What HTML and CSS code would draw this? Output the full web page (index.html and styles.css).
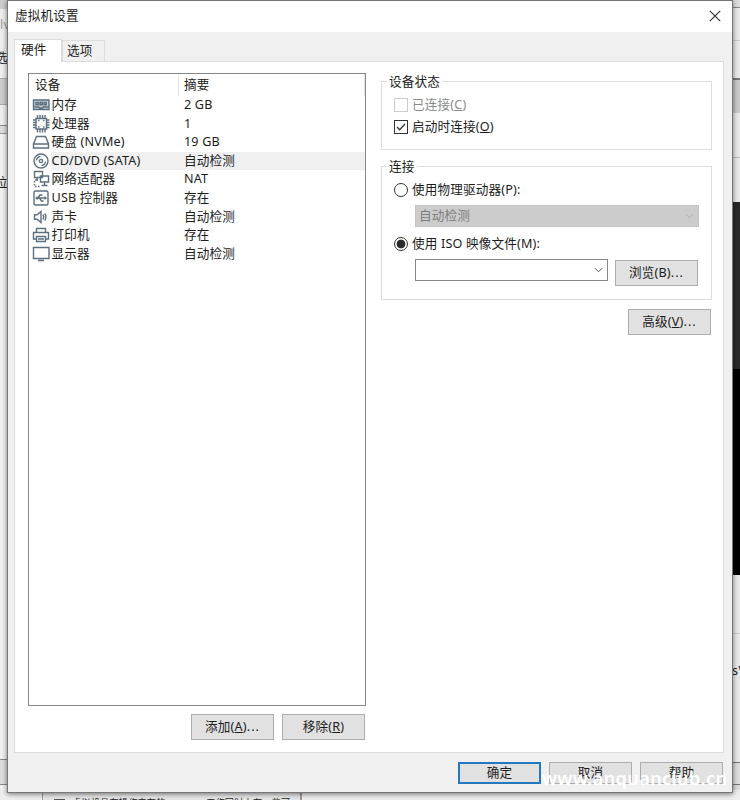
FILE: index.html
```
<!DOCTYPE html>
<html lang="zh-CN">
<head>
<meta charset="utf-8">
<title>虚拟机设置</title>
<link rel="stylesheet" href="styles.css">
</head>
<body>
<div class="desktop">
  <div class="backdrop">
    <div class="edge edge-left">
      <div class="l-title"></div>
      <div class="l-name">lv</div>
      <div class="l-menu">选</div>
      <div class="l-bar"></div>
      <div class="l-tool"></div>
      <div class="l-gap"></div>
      <div class="l-page">位</div>
      <div class="l-status"></div>
      <div class="l-end"></div>
    </div>
    <div class="edge edge-right">
      <div class="r-title"></div>
      <div class="r-menu"></div>
      <div class="r-tool"></div>
      <div class="r-bar"></div>
      <div class="r-row"></div>
      <div class="r-space"></div>
      <div class="r-screen"></div>
      <div class="r-black"></div>
      <div class="r-info"></div>
      <div class="r-text">s\</div>
      <div class="r-status"></div>
      <div class="r-end"></div>
    </div>
  </div>
  <div class="under"><div class="note"><i></i><span>虚拟机具在操作内存的 vmware 工作同时占有一些可</span></div></div>

  <div class="dialog">
    <header class="titlebar">
      <span>虚拟机设置</span>
      <svg class="close" viewBox="0 0 12 12"><path d="M.8.8 11.2 11.2M11.2.8.8 11.2"/></svg>
    </header>
    <nav class="tabs"><div class="tab active">硬件</div><div class="tab">选项</div></nav>
    <main class="panel">
      <section class="left">
        <div class="list">
          <div class="head"><span class="name">设备</span><span class="sum">摘要</span></div>
          <div class="row"><svg viewBox="0 0 18 18"><path class="tint" d="M1.500 4h15.500v9.500h-15.500z"/><path d="M1.500 4h15.500v9.500h-15.500zM4 6.500h2.200v2.200H4zM8 6.500h2.200v2.200H8zM12 6.500h2.200v2.200H12zM2.500 11h4l1 1h3l1-1h5"/></svg><span class="name">内存</span><span>2 GB</span></div>
          <div class="row"><svg viewBox="0 0 18 18"><path d="M4 3.500h10.500V14H4zM5.500 0v3M8 0v3M10.500 0v3M13 0v3M5.500 14.500v3M8 14.500v3M10.500 14.500v3M13 14.500v3M1 5h3M1 7.500h3M1 10h3M1 12.500h3M14.500 5h3M14.500 7.500h3M14.500 10h3M14.500 12.500h3"/><path d="M6 5.500h1.500M6 12h1.500M11 5.500h1.500M11 12h1.500"/></svg><span class="name">处理器</span><span>1</span></div>
          <div class="row"><svg viewBox="0 0 18 18"><path d="M4.500 3.500h9l3 7.500v4h-15v-4zM1.500 11h15"/></svg><span class="name">硬盘 (NVMe)</span><span>19 GB</span></div>
          <div class="row selected"><svg viewBox="0 0 18 18"><circle cx="9" cy="9" r="7"/><circle cx="9" cy="9" r="1.600"/><path d="M4.500 8.500a4.500 4.500 0 0 1 4-4M13.500 9.500a4.500 4.500 0 0 1-4 4"/></svg><span class="name">CD/DVD (SATA)</span><span>自动检测</span></div>
          <div class="row"><svg viewBox="0 0 18 18"><path d="M2.500 1.500h8v6h-8zM8.500 6h8v6h-8zM12.500 12v3M9.500 15.500h6M5 7.500v2.500M3 10h3"/><path stroke-dasharray="1.500 1.500" d="M2.500 11v5.500H8"/></svg><span class="name">网络适配器</span><span>NAT</span></div>
          <div class="row"><svg viewBox="0 0 18 18"><rect x="2" y="2" width="14" height="14" rx="1.500"/><path d="M4 9h9.500M6 9l2-3h2.500M7.500 9l2 3h2"/><circle cx="5" cy="9" r=".8"/><path d="m12.500 7.800 1.500 1.200-1.500 1.200"/></svg><span class="name">USB 控制器</span><span>存在</span></div>
          <div class="row"><svg viewBox="0 0 18 18"><path d="M2.500 6.800H5l4-3.300v11l-4-3.300H2.500zM11 6.500q1.600 2.500 0 5M12.800 5.500q2.300 3.500 0 7"/></svg><span class="name">声卡</span><span>自动检测</span></div>
          <div class="row"><svg viewBox="0 0 18 18"><path d="M4.500 6V2.500h9V6M4.500 13h-3V6.500h15V13h-3M4.500 10.500h9v5h-9zM6 13h6"/></svg><span class="name">打印机</span><span>存在</span></div>
          <div class="row"><svg viewBox="0 0 18 18"><path d="M1.500 2.500h15.500V13.500h-15.500zM6 15.500h6"/></svg><span class="name">显示器</span><span>自动检测</span></div>
        </div>
        <div class="actions"><div class="btn">添加(<u>A</u>)<span class="dots">...</span></div><div class="btn">移除(<u>R</u>)</div></div>
      </section>
      <section class="right">
        <div class="group state">
          <div class="legend">设备状态</div>
          <div class="opt off"><i class="check"></i>已连接(<u>C</u>)</div>
          <div class="opt"><i class="check"><svg viewBox="0 0 12 12"><path d="m2 6 2.700 2.700L10 3"/></svg></i>启动时连接(<u>O</u>)</div>
        </div>
        <div class="group conn">
          <div class="legend">连接</div>
          <div class="opt"><i class="radio"></i>使用物理驱动器(P):</div>
          <div class="combo disabled">自动检测<svg viewBox="0 0 10 6"><path d="m1 1 4 4 4-4"/></svg></div>
          <div class="opt iso"><i class="radio on"></i>使用 ISO 映像文件(M):</div>
          <div class="file"><div class="combo"><svg viewBox="0 0 10 6"><path d="m1 1 4 4 4-4"/></svg></div><div class="btn">浏览(B)<span class="dots">...</span></div></div>
        </div>
        <div class="btn advanced">高级(<u>V</u>)<span class="dots">...</span></div>
      </section>
    </main>
    <footer class="foot"><div class="btn primary">确定</div><div class="btn">取消</div><div class="btn">帮助</div></footer>
  </div>
  <div class="watermark">www.anquanclub.cn</div>
</div>
</body>
</html>
```
FILE: styles.css
```
* { box-sizing: border-box; }
body { margin: 0; font: 12.6px/18px "Noto Sans", "Noto Sans CJK SC", sans-serif; letter-spacing: .17px; color: #1c1c1c; }
.desktop { position: relative; width: 740px; height: 800px; overflow: hidden; background: #e9e9e9; }
.backdrop { display: flex; justify-content: space-between; height: 800px; }
.edge { display: flex; flex-direction: column; width: 8px; overflow: hidden; white-space: nowrap; }
.edge > div { flex: none; }
.l-title { height: 9px; background: #ccc; }
.l-name { height: 34px; padding-top: 7px; color: #999; background: #eee; }
.l-menu { height: 35px; padding-top: 6px; text-indent: -5px; background: #eee; }
.l-bar { height: 27px; background: #ccc; border-top: 1px solid #aaa; border-bottom: 1px solid #aaa; }
.l-tool { height: 21px; background: #eee; border-bottom: 1px solid #888; }
.l-gap { height: 8px; background: #ddd; border-bottom: 1px solid #999; }
.l-page { height: 625px; padding-top: 40px; text-indent: -5px; background: #f1f1f1; }
.l-status { height: 26px; background: #ddd; border: solid #888; border-width: 1px 0; }
.l-end { height: 15px; background: #f2f2f2; }
.r-title { height: 8px; background: #ddd; border-bottom: 1px solid #888; }
.r-menu { height: 33px; border-bottom: 1px solid #ccc; }
.r-tool { height: 37px; }
.r-bar { height: 35px; background: #c9c9c9; border-top: 2px solid #777; }
.r-row { height: 45px; border-bottom: 1px solid #bbb; }
.r-space { height: 44px; }
.r-screen { height: 167px; background: #292929; }
.r-black { height: 206px; background: #000; }
.r-info { height: 59px; border-bottom: 1px solid #ccc; }
.r-text { height: 128px; padding-top: 28px; }
.r-status { height: 23px; background: #ddd; border: solid #777; border-width: 1px 0; }
.r-end { height: 15px; background: #ddd; }
.under { position: absolute; left: 0; right: 0; top: 790px; height: 10px; background: #eee; }
.note { display: flex; gap: 7px; width: 260px; height: 10px; margin-left: 42px; padding: 7px 0 0 11px; overflow: hidden; font-size: 9.200px; line-height: 12px; white-space: nowrap; background: #e6e6e6; border: solid #999; border-width: 0 2px 0 1px; }
.note i { flex: none; width: 11px; height: 11px; margin-top: 2px; border: 1px solid #555; }

.dialog { position: absolute; left: 7px; top: 0; width: 726px; height: 793px; display: flex; flex-direction: column; background: #f0f0f0; border: 1px solid #777; box-shadow: 0 1px 5px #0008; }
.titlebar { display: flex; flex: none; align-items: center; justify-content: space-between; height: 31px; padding: 0 11px 2px 7px; background: #fff; }
.close { width: 12px; height: 12px; fill: none; stroke: #333; stroke-width: 1.200; }
.tabs { display: flex; flex: none; align-items: flex-end; height: 29px; padding: 0 6px; }
.tab { width: 43px; height: 21px; padding: 1px 0 0 4px; border: 1px solid #dcdcdc; border-bottom: 0; }
.tab.active { z-index: 1; width: 48px; height: 23px; margin-bottom: -1px; padding: 1px 0 0 6px; background: #fff; }
.panel { display: flex; flex: none; justify-content: space-between; width: 710px; height: 692px; margin-left: 6px; padding: 11px 11px 0 13px; background: #fff; border: 1px solid #dcdcdc; }
.left { width: 338px; }
.list { height: 633px; border: 1px solid #888; }
.head { display: flex; height: 22px; align-items: center; }
.head .name { width: 150px; height: 22px; padding: 2px 0 0 6px; border-right: 1px solid #e2e2e2; }
.head .sum { flex: 1; height: 22px; padding: 2px 0 0 5px; border-right: 1px solid #e2e2e2; }
.row { display: flex; align-items: center; height: 18.560px; padding-left: 3px; }
.row svg { flex: none; width: 18px; height: 18px; fill: none; stroke: #5c6f7f; stroke-width: 1.400; }
.row svg .tint { fill: #c3ced7; stroke: none; }
.row .name { width: 134px; padding-left: 1.500px; }
.selected { background: linear-gradient(90deg, #fff 22px, #f0f0f0 22px); }
.actions { display: flex; justify-content: flex-end; gap: 8px; margin: 8px 1px 0 0; }
.btn { flex: none; width: 83px; height: 26px; line-height: 24px; text-align: center; background: #e1e1e1; border: 1px solid #adadad; }
.dots { letter-spacing: 1px; }
u { text-underline-offset: 1px; }
.right { width: 331px; padding-top: 8px; }
.group { border: 1px solid #dcdcdc; padding-left: 12px; }
.legend { width: max-content; height: 18px; margin: -9px 0 0 -7px; padding: 0 2px; background: #fff; }
.state { height: 69px; }
.conn { height: 134px; margin-top: 16px; }
.opt { display: flex; align-items: center; height: 22px; white-space: pre; }
.state .legend { margin-bottom: 3px; }
.off { color: #8a8a8a; }
.check { display: flex; width: 14px; height: 14px; margin-right: 4px; border: 1px solid #333; }
.off .check { border-color: #ccc; }
.check svg { width: 12px; height: 12px; fill: none; stroke: #333; stroke-width: 1.300; }
.radio { width: 14px; height: 14px; margin-right: 4px; border: 1px solid #333; border-radius: 50%; }
.radio.on { background: radial-gradient(circle, #2b2b2b 4px, #fff 4.800px); }
.conn .opt { height: 27px; }
.conn .iso { margin-top: 3px; }
.combo { display: flex; align-items: center; justify-content: space-between; width: 193px; height: 22px; padding: 0 4px 0 3px; background: #fff; border: 1px solid #888; }
.combo svg { width: 9px; height: 6px; margin-left: auto; fill: none; stroke: #444; }
.combo.disabled { width: 284px; margin: 2px 0 0 21px; color: #7d7d7d; background: #ccc; border-color: #c4c4c4; }
.disabled svg { stroke: #aaa; }
.file { display: flex; gap: 7px; margin: 2px 0 0 21px; }
.file .btn { margin-top: 1px; }
.advanced { margin: 9px 1px 0 auto; }
.foot { display: flex; justify-content: flex-end; gap: 8px; padding: 9px 9px 0 0; }
.foot .btn { height: 22px; line-height: 20px; }
.foot .primary { border: 2px solid #2478bf; line-height: 18px; }
.watermark { position: absolute; left: 542px; top: 766px; font: 600 18px/24px "Noto Sans", sans-serif; letter-spacing: .42px; white-space: nowrap; color: #fff; }
```
